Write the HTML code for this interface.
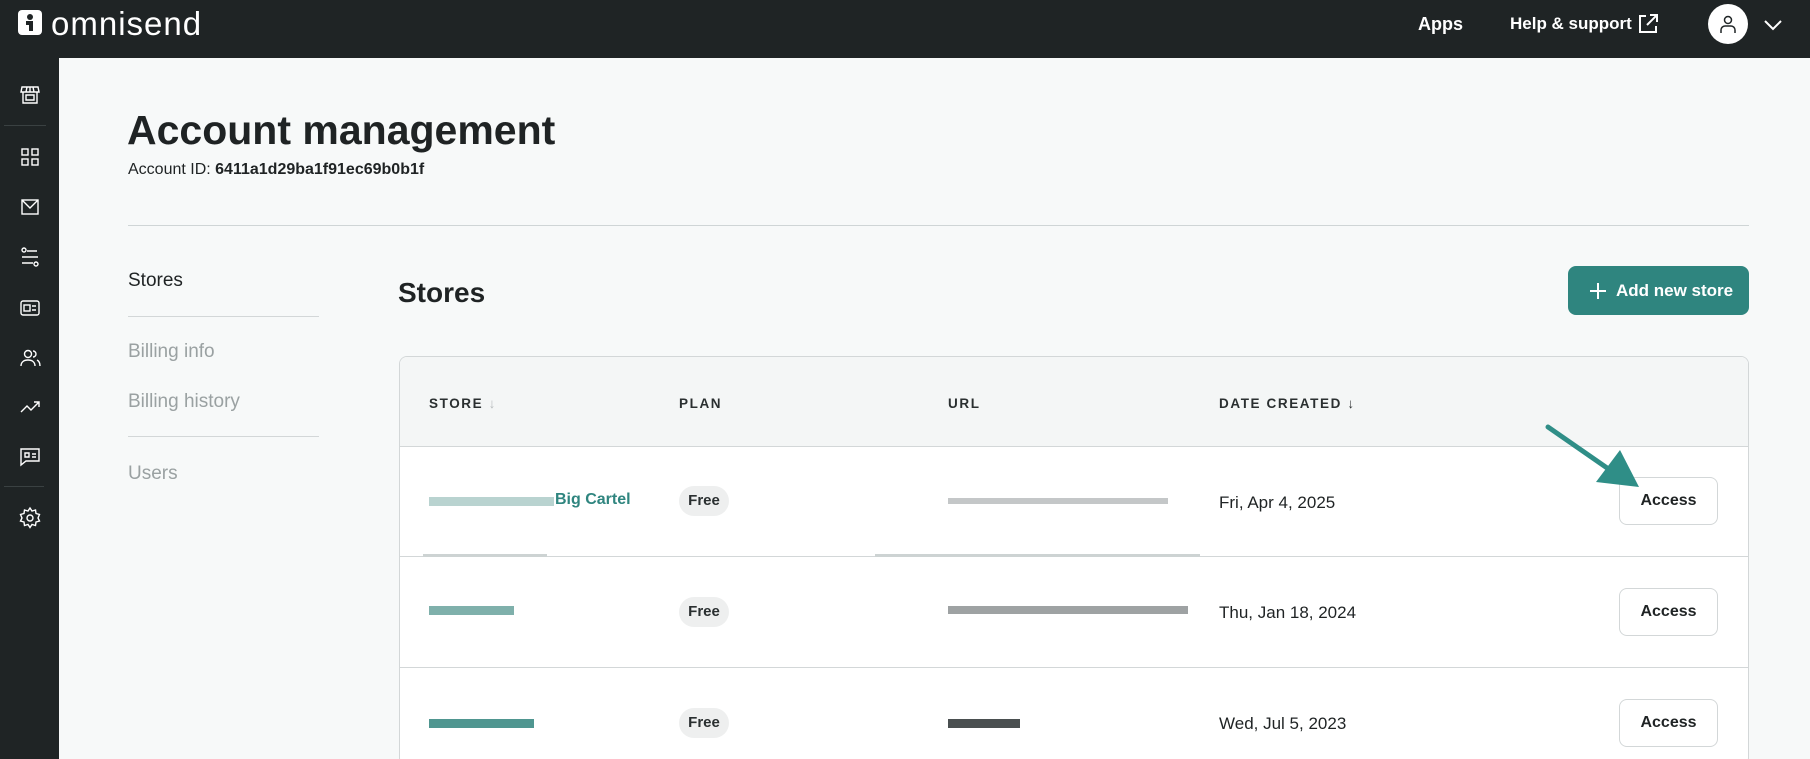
<!DOCTYPE html>
<html><head><meta charset="utf-8"><style>
*{box-sizing:border-box;margin:0;padding:0}
html{overflow:hidden;height:759px}
body{width:1810px;height:759px;overflow:hidden;background:#f7f9f9;font-family:"Liberation Sans",sans-serif;color:#1f2324;position:relative}
.abs{position:absolute}
.hdr{left:0;top:0;width:1810px;height:58px;background:#1f2425}
.side{left:0;top:58px;width:59px;height:701px;background:#1f2425}
.ic{position:absolute;left:18px;width:24px;height:24px}
.ic svg{width:24px;height:24px;fill:none;stroke:#fff;stroke-width:1.4}
.sep{position:absolute;left:4px;width:40px;height:1px;background:#3a4142}
.navt{position:absolute;left:128px;font-size:19px;color:#9aa1a2}
.th{position:absolute;top:396px;font-size:13.5px;letter-spacing:1.6px;font-weight:bold;color:#2a2f30}
.free{position:absolute;left:679px;width:50px;height:30px;border-radius:15px;background:#eeefef;font-size:15px;font-weight:bold;text-align:center;line-height:30px;color:#2a2f30}
.date{position:absolute;left:1219px;font-size:17px;color:#1f2324}
.acc{position:absolute;left:1619px;width:99px;height:48px;border:1px solid #d3d7d8;border-radius:8px;background:#fff;font-size:16px;font-weight:bold;text-align:center;line-height:46px}
.blk{position:absolute;height:9px}
</style></head><body>
<div class="abs hdr"></div>
<svg class="abs" style="left:18px;top:10px" width="24" height="25" viewBox="0 0 24 25"><rect x="0" y="0" width="24" height="25" rx="4" fill="#fff"/><circle cx="12" cy="7" r="3" fill="#1f2425"/><path d="M8 11h7v10h-4v-6H8z" fill="#1f2425"/></svg>
<div class="abs" style="left:51px;top:5px;font-size:33px;color:#fff;letter-spacing:1px">omnisend</div>
<div class="abs" style="left:1418px;top:14px;font-size:18px;font-weight:bold;color:#fff">Apps</div>
<div class="abs" style="left:1510px;top:14px;font-size:17px;font-weight:bold;color:#fff">Help &amp; support</div>
<svg class="abs" style="left:1637px;top:13px" width="22" height="22" viewBox="0 0 22 22" fill="none" stroke="#fff" stroke-width="2"><path d="M9 3H3v16h16v-6M13 2h7v7M20 2l-10 10"/></svg>
<div class="abs" style="left:1708px;top:4px;width:40px;height:40px;border-radius:50%;background:#fff"></div>
<svg class="abs" style="left:1716px;top:12px" width="24" height="24" viewBox="0 0 24 24" fill="none" stroke="#1f2425" stroke-width="1.5"><circle cx="12" cy="8" r="3.5"/><path d="M5 21v-3a4 4 0 0 1 4-4h6a4 4 0 0 1 4 4v3"/></svg>
<svg class="abs" style="left:1763px;top:18px" width="20" height="14" viewBox="0 0 20 14" fill="none" stroke="#fff" stroke-width="2"><path d="M2 3l8 8 8-8"/></svg>

<div class="abs side">
<div class="ic" style="top:25px"><svg viewBox="0 0 24 24"><path d="M4 4h16l1 5H3zM5 9v11h14V9M8 12h8v5H8zM9 4l-1 5M15 4l1 5M12 4v5"/></svg></div>
<div class="sep" style="top:67px;width:42px"></div>
<div class="ic" style="top:87px"><svg viewBox="0 0 24 24"><rect x="4" y="4" width="6" height="6"/><rect x="14" y="4" width="6" height="6"/><rect x="4" y="14" width="6" height="6"/><rect x="14" y="14" width="6" height="6"/></svg></div>
<div class="ic" style="top:137px"><svg viewBox="0 0 24 24"><rect x="4" y="5" width="16" height="14"/><path d="M4 5l8 8 8-8"/></svg></div>
<div class="ic" style="top:187px"><svg viewBox="0 0 24 24"><circle cx="6" cy="5" r="2"/><circle cx="18" cy="19" r="2"/><path d="M9 6h10M4 12h16M4 18h11"/></svg></div>
<div class="ic" style="top:238px"><svg viewBox="0 0 24 24"><rect x="3" y="5" width="18" height="14" rx="2"/><rect x="6" y="9" width="6" height="6"/><path d="M14 10h4M14 14h4"/></svg></div>
<div class="ic" style="top:288px"><svg viewBox="0 0 24 24"><circle cx="10" cy="8" r="3.5"/><path d="M3 20c0-4 3-6 7-6s7 2 7 6M15 5a3 3 0 0 1 0 6M19 14c2 1 3 3 3 6"/></svg></div>
<div class="ic" style="top:337px"><svg viewBox="0 0 24 24"><path d="M3 17l6-6 4 4 8-8M16 7h5v5"/></svg></div>
<div class="ic" style="top:386px"><svg viewBox="0 0 24 24"><path d="M3 5h18v12H8l-5 4z"/><path d="M7 9h4v4H7zM14 10h4M14 13h4"/></svg></div>
<div class="sep" style="top:428px"></div>
<div class="ic" style="top:448px"><svg viewBox="0 0 24 24"><circle cx="12" cy="12" r="3"/><path d="M12 2l2 3 3.5-1 .5 3.5 3.5 1-1.5 3.5 1.5 3-3.5 1-.5 3.5-3.5-1-2 3-2-3-3.5 1-.5-3.5-3.5-1 1.5-3-1.5-3.5 3.5-1 .5-3.5 3.5 1z"/></svg></div>
</div>

<div class="abs" style="left:127px;top:107px;font-size:41px;font-weight:bold;color:#1f2324">Account management</div>
<div class="abs" style="left:128px;top:161px;font-size:16px">Account ID: <b>6411a1d29ba1f91ec69b0b1f</b></div>
<div class="abs" style="left:128px;top:225px;width:1621px;height:1px;background:#cfd5d6"></div>

<div class="navt" style="top:270px;color:#1f2324">Stores</div>
<div class="abs" style="left:128px;top:316px;width:191px;height:1px;background:#d3d7d8"></div>
<div class="navt" style="top:341px">Billing info</div>
<div class="navt" style="top:391px">Billing history</div>
<div class="abs" style="left:128px;top:436px;width:191px;height:1px;background:#d3d7d8"></div>
<div class="navt" style="top:463px">Users</div>

<div class="abs" style="left:398px;top:277px;font-size:28px;font-weight:bold">Stores</div>
<div class="abs" style="left:1568px;top:266px;width:181px;height:49px;border-radius:8px;background:#2f857f;color:#fff;font-size:17px;font-weight:bold;line-height:49px;padding-left:48px">Add new store</div>
<svg class="abs" style="left:1589px;top:282px" width="18" height="18" viewBox="0 0 18 18" stroke="#fff" stroke-width="2"><path d="M9 1v16M1 9h16"/></svg>

<div class="abs" style="left:399px;top:356px;width:1350px;height:410px;border:1px solid #d3d7d8;border-radius:8px;background:#fff;overflow:hidden">
<div style="height:90px;background:#f4f6f6;border-bottom:1px solid #d3d7d8"></div>
<div style="position:absolute;top:199px;left:0;width:100%;height:1px;background:#d3d7d8"></div>
<div style="position:absolute;top:310px;left:0;width:100%;height:1px;background:#d3d7d8"></div>
<div style="position:absolute;top:197px;left:23px;width:124px;height:3px;background:#cdd3d3"></div>
<div style="position:absolute;top:197px;left:475px;width:325px;height:3px;background:#cdd3d3"></div>
</div>
<div class="th" style="left:429px">STORE <span style="color:#b5babb;font-weight:normal">↓</span></div>
<div class="th" style="left:679px">PLAN</div>
<div class="th" style="left:948px">URL</div>
<div class="th" style="left:1219px">DATE CREATED <span>↓</span></div>

<div class="blk" style="left:429px;top:497px;width:125px;background:#b9d3d0"></div>
<div class="abs" style="left:555px;top:491px;font-size:16px;font-weight:bold;color:#2f857f">Big Cartel</div>
<div class="blk" style="left:948px;top:498px;width:220px;height:6px;background:#c4c7c8"></div>
<div class="blk" style="left:429px;top:606px;width:85px;background:#7fb0ab"></div>
<div class="blk" style="left:948px;top:606px;width:240px;height:8px;background:#9ea2a3"></div>
<div class="blk" style="left:429px;top:719px;width:105px;background:#4f9690"></div>
<div class="blk" style="left:948px;top:719px;width:72px;background:#4a4f50"></div>

<div class="free" style="top:486px">Free</div>
<div class="free" style="top:597px">Free</div>
<div class="free" style="top:708px">Free</div>
<div class="date" style="top:493px">Fri, Apr 4, 2025</div>
<div class="date" style="top:603px">Thu, Jan 18, 2024</div>
<div class="date" style="top:714px">Wed, Jul 5, 2023</div>
<div class="acc" style="top:477px">Access</div>
<div class="acc" style="top:588px">Access</div>
<div class="acc" style="top:699px">Access</div>

<svg class="abs" style="left:1540px;top:420px" width="110" height="75" viewBox="0 0 110 75"><path d="M8 7L70 50" stroke="#2f8e87" stroke-width="5" stroke-linecap="round"/><path d="M56 62L80 30L99 67z" fill="#2f8e87"/></svg>
</body></html>
